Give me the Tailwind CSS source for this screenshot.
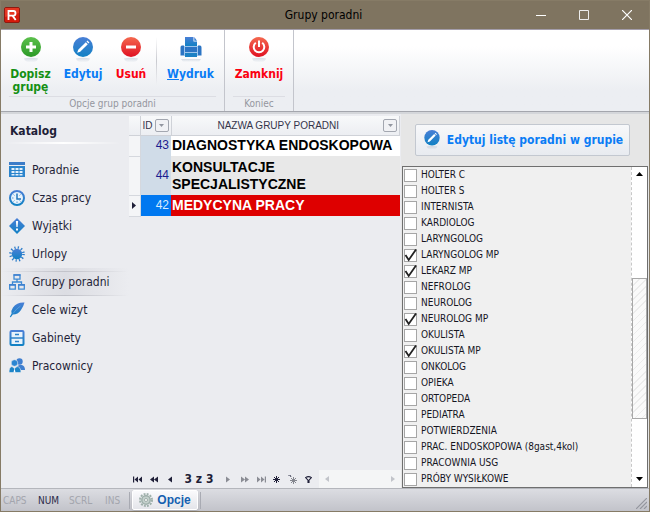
<!DOCTYPE html>
<html lang="pl">
<head>
  <meta charset="UTF-8">
  <meta name="viewport" content="width=device-width, initial-scale=1.0">
  <title>Grupy poradni</title>
  <script src="https://cdn.jsdelivr.net/npm/@tailwindcss/browser@4"></script>
</head>
<body class="font-['DejaVu_Sans_Condensed','DejaVu_Sans',sans-serif] text-[#1f1f38]">
  <!-- shared icon parts -->
  <svg class="absolute size-0" aria-hidden="true">
    <defs>
      <linearGradient id="blue" x1="0" y1="0" x2="0" y2="1"><stop offset="0" stop-color="#4a7fd6"/><stop offset="1" stop-color="#1181c4"/></linearGradient>
      <linearGradient id="green" x1="0" y1="0" x2="0" y2="1"><stop offset="0" stop-color="#5cc04c"/><stop offset="1" stop-color="#2c9a28"/></linearGradient>
      <linearGradient id="red" x1="0" y1="0" x2="0" y2="1"><stop offset="0" stop-color="#f4694f"/><stop offset="1" stop-color="#e01022"/></linearGradient>
      <linearGradient id="fade" x1="0" y1="0" x2="0" y2="1"><stop offset="0" stop-color="#7d93b0" stop-opacity=".3"/><stop offset="1" stop-color="#7d93b0" stop-opacity="0"/></linearGradient>
      <symbol id="pencil" viewBox="0 0 20 26">
        <circle cx="10" cy="10" r="10" fill="url(#blue)"/>
        <path d="M4.200 15.800l1-3 7.600-7.600 2 2-7.600 7.600zM13.500 4.500l.9-.9 2 2-.9.9z" fill="#fff"/>
        <path d="M3 21.500q7-1.500 14 0q-1 4-7 4t-7-4z" fill="url(#fade)"/>
      </symbol>
    </defs>
  </svg>

  <div class="flex min-h-screen flex-col border border-[#867b66] bg-[#ebecf0]">
    <header class="flex h-[28px] items-center bg-[#7f7460]">
      <svg class="ml-[3px] w-4" viewBox="0 0 16 16" aria-hidden="true">
        <rect x=".5" y=".5" width="15" height="15" rx="1.500" fill="#d61a0c" stroke="#8e1a10"/>
        <path d="M1 1h14v5L1 10z" fill="#ee4a32" opacity=".6"/>
        <path d="M4.500 13V4h5q2 0 2 2.300t-2 2.300h-5M8.500 8.600l3.200 4.400" fill="none" stroke="#fff" stroke-width="1.800"/>
      </svg>
      <h1 class="flex-1 pl-[108px] text-center text-[12px] text-black">Grupy poradni</h1>
      <div class="mr-px flex">
        <button class="flex h-7 w-[43px] items-center justify-center" aria-label="Minimalizuj"><svg class="w-[10px]" viewBox="0 0 10 10"><path d="M0 5.500h10" stroke="#fff"/></svg></button>
        <button class="flex h-7 w-[43px] items-center justify-center" aria-label="Maksymalizuj"><svg class="w-[10px]" viewBox="0 0 10 10"><path d="M.5.5h9v9h-9z" fill="none" stroke="#eee"/></svg></button>
        <button class="flex h-7 w-[43px] items-center justify-center" aria-label="Zamknij okno"><svg class="w-[10px]" viewBox="0 0 10 10"><path d="M0 0l10 10M10 0L0 10" stroke="#fff" stroke-width="1.200"/></svg></button>
      </div>
    </header>

    <!-- ribbon -->
    <div class="flex h-[83px] border-t border-b border-t-[#a39dab] border-b-[#a4a6ad] bg-linear-to-b from-white from-20% to-[#eceef2] to-75% text-[12px] leading-[13px] font-bold">
      <section class="flex w-[224px] flex-col border-r border-[#c3c5cc]">
        <div class="flex flex-1 pt-[7px]">
          <button class="flex w-[59px] flex-col items-center gap-[5px] text-[#149014]">
            <svg class="h-[26px] w-5 shrink-0" viewBox="0 0 20 26"><circle cx="10" cy="10" r="10" fill="url(#green)"/><path d="M10 5v10M5 10h10" stroke="#fff" stroke-width="3"/><path d="M3 21.500q7-1.500 14 0q-1 4-7 4t-7-4z" fill="url(#fade)"/></svg>
            <span>Dopisz grupę</span>
          </button>
          <button class="flex w-[46px] flex-col items-center gap-[5px] text-[#0a7cf5]">
            <svg class="h-[26px] w-5 shrink-0"><use href="#pencil"/></svg>
            <span>Edytuj</span>
          </button>
          <button class="flex w-[50px] flex-col items-center gap-[5px] text-[#fb0010]">
            <svg class="h-[26px] w-5 shrink-0" viewBox="0 0 20 26"><circle cx="10" cy="10" r="10" fill="url(#red)"/><path d="M5 10h10" stroke="#fff" stroke-width="3"/><path d="M3 21.500q7-1.500 14 0q-1 4-7 4t-7-4z" fill="url(#fade)"/></svg>
            <span>Usuń</span>
          </button>
          <div class="h-12 w-px bg-linear-to-b from-transparent via-[#c9cad0] to-transparent"></div>
          <button class="flex flex-1 flex-col items-center gap-[5px] text-[#0a7cf5]">
            <svg class="h-[26px] w-[22px] shrink-0" viewBox="0 0 22 26">
              <path d="M5 0h8.500v4.500H17V9H5zM14.300 0L17 3.700h-2.700z" fill="url(#blue)"/>
              <path d="M2 8.500h2V10h14V8.500h2q1.500 0 1.500 2v8H18V16H4v2.500H.5v-8q0-2 1.500-2z" fill="#2b74c4"/>
              <path d="M5 16h12v4H5z" fill="#1b80c4"/>
              <path d="M4 9.500h14M4.500 15.500h13M4.500 9v10M17.500 9v10" stroke="#9cc4ec" fill="none"/>
              <path d="M1 22h20l-2 3H3z" fill="url(#fade)"/>
            </svg>
            <span><u>W</u>ydruk</span>
          </button>
        </div>
        <div class="mx-2 h-[15px] border-t border-[#dcdde3] text-center text-[10px] font-normal text-[#94969e]">Opcje grup poradni</div>
      </section>
      <section class="flex w-[69px] flex-col border-r border-[#c3c5cc]">
        <button class="flex flex-1 flex-col items-center gap-[5px] pt-[7px] text-[#fb0010]">
          <svg class="h-[26px] w-5 shrink-0" viewBox="0 0 20 26"><circle cx="10" cy="10" r="10" fill="url(#red)"/><path d="M6.800 5.800a5.300 5.300 0 1 0 6.400 0M10 3.500V10" fill="none" stroke="#fff" stroke-width="2"/><path d="M3 21.500q7-1.500 14 0q-1 4-7 4t-7-4z" fill="url(#fade)"/></svg>
          <span>Zamknij</span>
        </button>
        <div class="mx-2 h-[15px] border-t border-[#dcdde3] text-center text-[10px] font-normal text-[#94969e]">Koniec</div>
      </section>
    </div>

    <main class="flex flex-1 border-t-2 border-[#d4d6da]">
      <nav class="w-32 shrink-0 pt-[9px] text-[12px]">
        <h2 class="pl-[9px] text-[12px] leading-4 font-bold">Katalog</h2>
        <div class="mt-[3px] mb-[12px] ml-1 h-[2px] w-[116px] bg-linear-to-r from-transparent via-white to-transparent"></div>
        <ul>
          <li><a href="#" class="flex h-7 items-center gap-[7px] pl-2">
            <svg class="size-4" viewBox="0 0 16 16"><path d="M0 0h16v3H0z" fill="#3c7cc8"/><path d="M0 4h16v11H0z" fill="#2b84cc"/><path d="M2.500 6h3v2h-3zm4 0h3v2h-3zm4 0h3v2h-3zM2.500 9h3v2h-3zm4 0h3v2h-3zm4 0h3v2h-3zM2.500 12h3v1.500h-3zm4 0h3v1.500h-3zm4 0h3v1.500h-3z" fill="#e4f0fb"/></svg>
            Poradnie</a></li>
          <li><a href="#" class="flex h-7 items-center gap-[7px] pl-2">
            <svg class="size-4" viewBox="0 0 16 16"><circle cx="8" cy="8" r="7" fill="#eaf3fb" stroke="url(#blue)" stroke-width="2"/><path d="M8 3.500V9h4" fill="none" stroke="#2477bd" stroke-width="1.500"/><path d="M8 13v-1.500M3 8h1.500M4.500 4.500l1 1M4.500 11.500l1-1M11.500 4.500l-1 1M11.500 11.500l-1-1" stroke="#5a9bd8"/></svg>
            Czas pracy</a></li>
          <li><a href="#" class="flex h-7 items-center gap-[7px] pl-2">
            <svg class="size-4" viewBox="0 0 16 16"><path d="M8 0l8 8-8 8-8-8z" fill="url(#blue)"/><path d="M6.900 3h2.200l-.5 6H7.400zM7 10.500h2v2H7z" fill="#fff"/></svg>
            Wyjątki</a></li>
          <li><a href="#" class="flex h-7 items-center gap-[7px] pl-2">
            <svg class="size-4" viewBox="0 0 16 16"><circle cx="8" cy="8" r="5.200" fill="url(#blue)"/><circle cx="8" cy="8" r="6.500" fill="none" stroke="#2b7cca" stroke-width="2.600" stroke-dasharray="1.200 2.200"/></svg>
            Urlopy</a></li>
          <li class="bg-linear-to-r from-transparent via-[#dcdde3] to-transparent"><a href="#" class="relative flex h-7 items-center gap-[7px] pl-2 before:absolute before:inset-x-0 before:top-[3px] before:h-px before:bg-linear-to-r before:from-transparent before:via-[#c2c3ca] before:to-transparent after:absolute after:inset-x-0 after:bottom-0 after:h-px after:bg-linear-to-r after:from-transparent after:via-[#c2c3ca] after:to-transparent" aria-current="page">
            <svg class="size-4" viewBox="0 0 16 16"><path d="M5 .8h6v4.400H5zM.7 10.700h5.600v4.500H.7zM9.700 10.700h5.600v4.500H9.700zM8 5.500v2.500M3.500 10.500V8h9v2.500" fill="none" stroke="#3e8ad4" stroke-width="1.300"/><path d="M4.500 1h7M.2 11h6.600M9.200 11h6.600" stroke="#3e7fd0" stroke-width="1.600"/></svg>
            Grupy poradni</a></li>
          <li><a href="#" class="flex h-7 items-center gap-[7px] pl-2">
            <svg class="size-4" viewBox="0 0 16 16"><path d="M15.500.5Q8 0 4 5.500 1.800 8.500 2.600 11.500L.8 15l1 .3 2-2.800Q9 12.500 12 8 14.500 4.500 15.500.5z" fill="url(#blue)"/><path d="M4 11.500Q7 7 11.500 4" fill="none" stroke="#7db6e8" stroke-width=".5"/></svg>
            Cele wizyt</a></li>
          <li><a href="#" class="flex h-7 items-center gap-[7px] pl-2">
            <svg class="size-4" viewBox="0 0 16 16"><rect x="1.500" y="1" width="13" height="14" rx="1" fill="#e8f2fb" stroke="url(#blue)" stroke-width="2"/><path d="M2 8h12" stroke="#2b80c8" stroke-width="1.500"/><path d="M6 4.500h4M6 11.500h4" stroke="#2b80c8" stroke-width="1.500"/></svg>
            Gabinety</a></li>
          <li><a href="#" class="flex h-7 items-center gap-[7px] pl-2">
            <svg class="size-4" viewBox="0 0 16 16"><circle cx="10.500" cy="3.500" r="3.200" fill="#3f7fd0"/><path d="M8 8.500q2.500-2.500 5-1.500 3 1 3 5h-5z" fill="#3f7fd0"/><circle cx="5.500" cy="5" r="3.300" fill="#2a86d2" stroke="#ebecf0" stroke-width=".6"/><path d="M0 14.500q0-5.500 3-6l2.500 2L8 8.500q4 .5 4 6z" fill="#1c84c8" stroke="#ebecf0" stroke-width=".6"/><path d="M5.500 10l-1 4.500h2z" fill="#fff"/></svg>
            Pracownicy</a></li>
        </ul>
      </nav>

      <section class="flex w-[272px] shrink-0 flex-col font-['Liberation_Sans',sans-serif]">
        <table class="mt-[2px] w-[271px] table-fixed border-collapse text-left">
          <colgroup><col class="w-[11px]"><col class="w-[31px]"><col></colgroup>
          <thead class="bg-linear-to-b from-[#f8f9fa] to-[#eceef2] text-[10px] text-[#34344a]">
            <tr class="h-[19px]">
              <th class="border-r border-b border-[#cfd2d8] p-0"></th>
              <th class="border-r border-b border-[#cfd2d8] p-0 font-normal">
                <div class="flex items-center justify-between px-[2px]">ID
                  <button class="flex h-[13px] w-[14px] items-center justify-center rounded-xs border border-[#a3a7b0] bg-[#f1f2f5]" aria-label="Filtruj ID"><svg class="w-[5px]" viewBox="0 0 5 3"><path d="M0 0h5L2.500 3z" fill="#9296a0"/></svg></button>
                </div>
              </th>
              <th class="border-r border-b border-[#cfd2d8] p-0 font-normal">
                <div class="flex items-center px-[2px]"><span class="flex-1 text-center">NAZWA GRUPY PORADNI</span>
                  <button class="flex h-[13px] w-[14px] items-center justify-center rounded-xs border border-[#a3a7b0] bg-[#f1f2f5]" aria-label="Filtruj nazwę"><svg class="w-[5px]" viewBox="0 0 5 3"><path d="M0 0h5L2.500 3z" fill="#9296a0"/></svg></button>
                </div>
              </th>
            </tr>
          </thead>
          <tbody class="text-[14px] leading-[17px] font-bold text-black">
            <tr class="h-[21px] bg-white">
              <td class="border-r border-b border-[#d5d8de] bg-[#f4f5f7] p-0"></td>
              <td class="bg-[#d0dce8] p-0 pr-[2px] text-right text-[12px] font-normal text-[#1c1c90]">43</td>
              <td class="p-0 pl-px whitespace-nowrap">DIAGNOSTYKA ENDOSKOPOWA</td>
            </tr>
            <tr class="h-[39px] bg-[#e8e8e8]">
              <td class="border-r border-b border-[#d5d8de] bg-[#f4f5f7] p-0"></td>
              <td class="bg-[#d0dce8] p-0 pr-[2px] text-right text-[12px] font-normal text-[#1c1c90]">44</td>
              <td class="p-0 pl-px">KONSULTACJE<br>SPECJALISTYCZNE</td>
            </tr>
            <tr class="h-[21px] bg-[#de0000] text-white" aria-selected="true">
              <td class="border-r border-b border-[#d5d8de] bg-[#f4f5f7] p-0"><svg class="mx-auto h-[7px] w-1" viewBox="0 0 4 7"><path d="M0 0l4 3.500L0 7z" fill="#1f1f38"/></svg></td>
              <td class="bg-[#0078f0] p-0 pr-[2px] text-right text-[12px] font-normal text-[#d8ecff]">42</td>
              <td class="p-0 pl-px">MEDYCYNA PRACY</td>
            </tr>
          </tbody>
        </table>

        <!-- record navigator -->
        <div class="mt-auto flex h-[18px] items-center font-['DejaVu_Sans_Condensed','DejaVu_Sans',sans-serif]">
          <button class="flex w-[17px] justify-center" aria-label="Pierwszy"><svg class="h-[7px] w-[9px]" viewBox="0 0 9 7"><path d="M0 .5h1.200v6H0zM5 .5v6l-3.500-3zM9 .5v6l-3.500-3z" fill="#1f1f38"/></svg></button>
          <button class="flex w-[15px] justify-center" aria-label="Poprzednia strona"><svg class="h-[7px] w-[8px]" viewBox="0 0 8 7"><path d="M4 .5v6l-4-3zM8 .5v6l-4-3z" fill="#1f1f38"/></svg></button>
          <button class="flex w-[17px] justify-center" aria-label="Poprzedni"><svg class="h-[7px] w-[4px]" viewBox="0 0 4 7"><path d="M4 .5v6l-4-3z" fill="#1f1f38"/></svg></button>
          <span class="w-[42px] text-center text-[12px] font-bold whitespace-nowrap">3 z 3</span>
          <button class="flex w-[16px] justify-center" aria-label="Następny"><svg class="h-[7px] w-[4px]" viewBox="0 0 4 7"><path d="M0 .5v6l4-3z" fill="#8a8c94"/></svg></button>
          <button class="flex w-[17px] justify-center" aria-label="Następna strona"><svg class="h-[7px] w-[8px]" viewBox="0 0 8 7"><path d="M0 .5v6l4-3zM4 .5v6l4-3z" fill="#8a8c94"/></svg></button>
          <button class="flex w-[16px] justify-center" aria-label="Ostatni"><svg class="h-[7px] w-[9px]" viewBox="0 0 9 7"><path d="M0 .5v6l3.500-3zM4 .5v6l3.500-3zM7.800 .5H9v6H7.800z" fill="#8a8c94"/></svg></button>
          <button class="flex w-[15px] justify-center" aria-label="Dodaj zakładkę"><svg class="size-[7px]" viewBox="0 0 7 7"><path d="M3.500 0v7M0 3.500h7M1 1l5 5M6 1L1 6" stroke="#1f1f38"/></svg></button>
          <button class="flex w-[16px] justify-center" aria-label="Idź do zakładki"><svg class="h-[9px] w-[9px]" viewBox="0 0 9 9"><path d="M5.500 2v7M2 5.500h7M3 3l5 5M8 3L3 8" stroke="#85878f"/><path d="M0 0h2l1 2" fill="none" stroke="#44465a"/></svg></button>
          <button class="flex w-[16px] justify-center" aria-label="Filtr"><svg class="h-[7px] w-[7px]" viewBox="0 0 7 7"><path d="M.6 1.600q2.900-2 5.800 0L4 4.200V7H3V4.200z" fill="none" stroke="#1f1f38" stroke-width="1.100"/></svg></button>
          <div class="ml-auto flex h-full w-[82px] items-center justify-between bg-[#f4f5f6] px-[6px]">
            <svg class="h-[6px] w-1" viewBox="0 0 4 6"><path d="M4 0v6L0 3z" fill="#c2c4ca"/></svg>
            <svg class="h-[6px] w-1" viewBox="0 0 4 6"><path d="M0 0v6l4-3z" fill="#c2c4ca"/></svg>
          </div>
        </div>
      </section>

      <section class="flex min-w-0 flex-1 flex-col bg-[#e6e6e6] pr-[1px]">
        <button class="mt-[10px] mr-[18px] mb-[10px] ml-[14px] flex h-8 items-center justify-center gap-[7px] rounded-xs border border-[#c3c8d0] bg-linear-to-b from-[#f7f8fa] to-[#e8ebf0] pl-[2px] text-[12px] font-bold whitespace-nowrap text-[#0a7cf5]">
          <svg class="h-[20px] w-4 shrink-0"><use href="#pencil"/></svg>
          Edytuj listę poradni w grupie
        </button>
        <div class="ml-px flex flex-1 border border-[#6f6f6f] bg-[#f0f0f0]">
          <ul id="clinics" class="flex-1 text-[10px] leading-4 text-[#15151f]"></ul>
          <!-- scrollbar -->
          <div class="flex w-4 flex-col items-center border-l border-dashed border-[#c8c8c8] bg-white">
            <svg class="mt-[5px] h-[4px] w-[7px]" viewBox="0 0 7 4"><path d="M0 4h7L3.500 0z" fill="#000"/></svg>
            <div class="mt-[102px] h-[141px] w-[15px] border border-[#a8a8a8] bg-[repeating-linear-gradient(135deg,#fafafa_0px,#fafafa_4px,#ececec_4px,#ececec_5px)]"></div>
            <svg class="mt-auto mb-[6px] h-[4px] w-[7px]" viewBox="0 0 7 4"><path d="M0 0h7L3.500 4z" fill="#000"/></svg>
          </div>
        </div>
      </section>
    </main>

    <footer class="flex h-[23px] items-center border-t border-[#b4b6bc] bg-linear-to-b from-[#dcdde2] to-[#c2c3ca] text-[10px] text-[#a3a5ad]">
      <span class="w-[35px] pl-[2px]">CAPS</span>
      <span class="w-[32px] pl-[2px] text-[#2a2a48]">NUM</span>
      <span class="w-[35px] pl-[1px]">SCRL</span>
      <span class="w-[26px] pl-[2px]">INS</span>
      <span class="h-[17px] w-px bg-[#a9abb3]"></span>
      <button class="mx-[2px] flex h-[20px] w-[66px] items-center justify-center gap-[4px] rounded-xs border border-white bg-linear-to-b from-[#fafafc] to-[#e4e5ea] font-['Liberation_Sans',sans-serif] text-[12px] font-bold text-[#1560b0] shadow-sm">
        <svg class="size-[14px]" viewBox="0 0 14 14"><circle cx="7" cy="7" r="4.200" fill="#c4d0cc" stroke="#9fb0ab" stroke-width="1.500"/><circle cx="7" cy="7" r="6" fill="none" stroke="#9fb0ab" stroke-width="2" stroke-dasharray="1.900 1.240"/><circle cx="7" cy="7" r="1.500" fill="#fff" stroke="#8fa09b" stroke-width=".8"/></svg>
        Opcje
      </button>
      <span class="h-[17px] w-px bg-[#a9abb3]"></span>
      <svg class="mt-auto mr-[2px] mb-[2px] ml-auto size-[11px]" viewBox="0 0 11 11"><path d="M0 11L11 0M4 11l7-7M8 11l3-3" stroke="#94969e" stroke-width="1.200"/></svg>
    </footer>
  </div>

  <script>
    const clinics = [
      ["HOLTER C", false],
      ["HOLTER S", false],
      ["INTERNISTA", false],
      ["KARDIOLOG", false],
      ["LARYNGOLOG", false],
      ["LARYNGOLOG MP", true],
      ["LEKARZ MP", true],
      ["NEFROLOG", false],
      ["NEUROLOG", false],
      ["NEUROLOG MP", true],
      ["OKULISTA", false],
      ["OKULISTA MP", true],
      ["ONKOLOG", false],
      ["OPIEKA", false],
      ["ORTOPEDA", false],
      ["PEDIATRA", false],
      ["POTWIERDZENIA", false],
      ["PRAC. ENDOSKOPOWA (8gast,4kol)", false],
      ["PRACOWNIA USG", false],
      ["PRÓBY WYSIŁKOWE", false],
    ];

    document.getElementById("clinics").innerHTML = clinics.map(([name, checked]) => `
      <li>
        <label class="flex h-4 items-center gap-[4px] pl-px whitespace-nowrap">
          <span class="grid">
            <input type="checkbox" ${checked ? "checked" : ""} class="peer col-start-1 row-start-1 size-[13px] appearance-none border border-[#a6a6a6] bg-white">
            <svg class="pointer-events-none invisible col-start-1 row-start-1 size-[13px] peer-checked:visible" viewBox="0 0 13 13"><path d="M1.500 6l3.200 5L12 .5" fill="none" stroke="#222" stroke-width="1.800"/></svg>
          </span>
          ${name}
        </label>
      </li>`).join("");
  </script>
</body>
</html>
